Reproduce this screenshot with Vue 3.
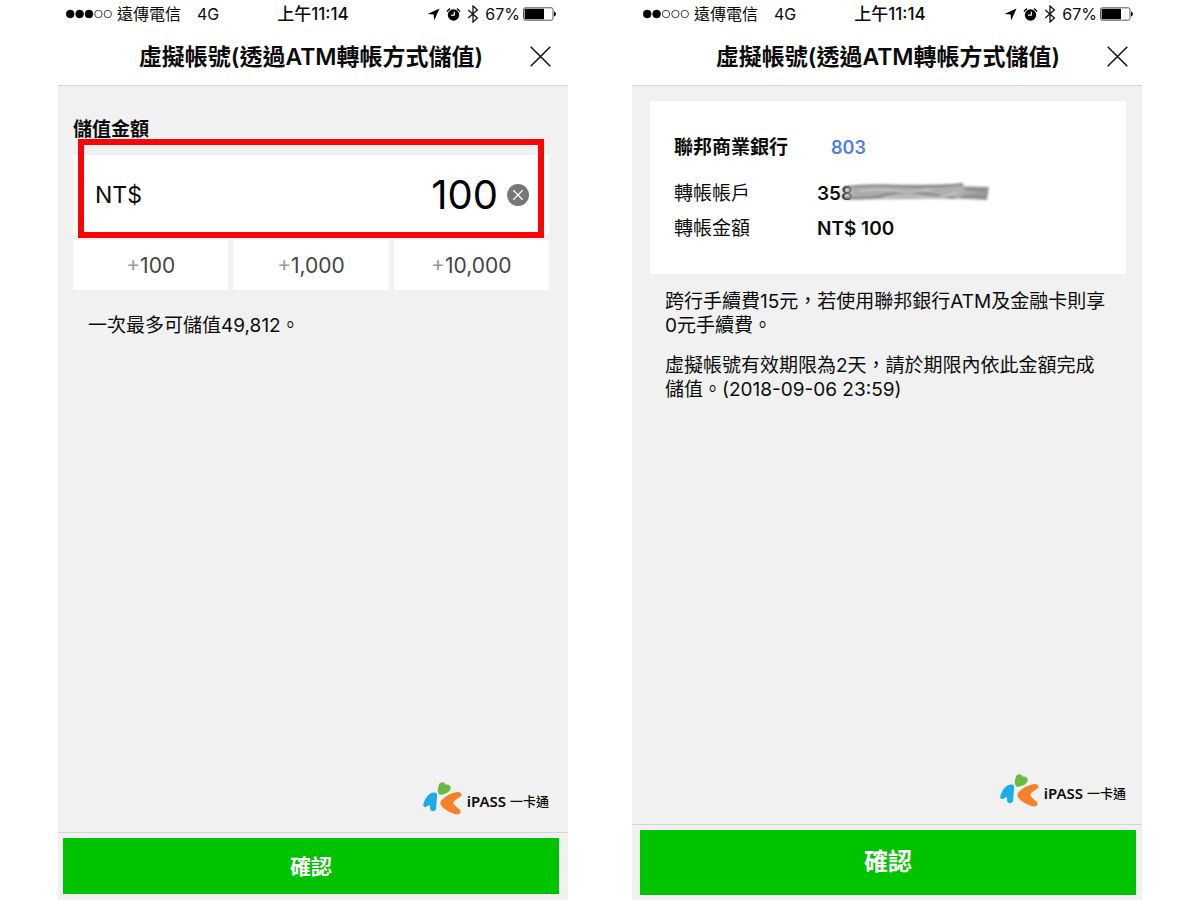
<script setup>
import { ref } from 'vue'

const amount = ref('100')
const quickAmounts = [100, 1000, 10000]
const screens = [
  { id: 'amount', signal: 3 },
  { id: 'account', signal: 2 }
]

const addAmount = (value) => {
  amount.value = String(Number(amount.value) + value)
}
const clearAmount = () => {
  amount.value = ''
}
</script>

<template>
  <div class="page" lang="zh-Hant">
    <section v-for="screen in screens" :key="screen.id" class="phone" :class="screen.id">
      <header class="top">
        <div class="status">
          <div class="status-left">
            <svg class="signal" width="46" height="10" viewBox="0 0 46 10">
              <circle
                v-for="n in 5"
                :key="n"
                :cx="n * 9.4 - 5.2"
                cy="5"
                :r="n <= screen.signal ? 3.9 : 3.7"
                :class="{ on: n <= screen.signal }"
              />
            </svg>
            <span class="carrier">遠傳電信</span>
            <span>4G</span>
          </div>
          <span class="time">上午11:14</span>
          <div class="status-right">
            <svg class="location" width="13" height="13" viewBox="0 0 13 13">
              <path d="M12.5 0.5L7.2 12.5L6.6 6.5L0.5 6.1Z" />
            </svg>
            <svg class="alarm" width="15" height="15" viewBox="0 0 15 15">
              <circle cx="7.5" cy="8" r="5.7" />
              <path class="bell" d="M1 4.6A7.6 7.6 0 0 1 4.1 1.6M10.9 1.6A7.6 7.6 0 0 1 14 4.6" />
              <path class="hand" d="M8.3 4.8V8.2H5" />
            </svg>
            <svg class="bluetooth" width="12" height="18" viewBox="0 0 12 18">
              <path d="M1.2 5L10.4 13L6 17V1L10.4 5L1.2 13" />
            </svg>
            <span>67%</span>
            <svg class="battery" width="33" height="14" viewBox="0 0 33 14">
              <rect class="shell" x="0.5" y="0.8" width="29.5" height="12.4" rx="1.8" />
              <rect x="1.6" y="1.8" width="19.4" height="10.4" />
              <path d="M31 4.6Q33 5.2 33 7T31 9.4Z" />
            </svg>
          </div>
        </div>
        <div class="title-bar">
          <h1>虛擬帳號(透過ATM轉帳方式儲值)</h1>
          <button class="close" type="button" aria-label="關閉">
            <svg width="21" height="21" viewBox="0 0 21 21">
              <path d="M0.7 0.7L20.3 20.3M20.3 0.7L0.7 20.3" />
            </svg>
          </button>
        </div>
      </header>

      <main v-if="screen.id === 'amount'" class="content">
        <label class="amount-label" for="amount">儲值金額</label>
        <div class="amount-card">
          <span class="currency">NT$</span>
          <input id="amount" v-model="amount" class="amount-input" type="text" inputmode="numeric">
          <button class="clear" type="button" aria-label="清除" @click="clearAmount">
            <svg width="22" height="22" viewBox="0 0 22 22">
              <circle cx="11" cy="11" r="11" />
              <path d="M6.3 6.3L15.7 15.7M15.7 6.3L6.3 15.7" />
            </svg>
          </button>
          <div class="highlight"></div>
        </div>
        <div class="quick">
          <button v-for="value in quickAmounts" :key="value" type="button" @click="addAmount(value)">
            <span class="plus">+</span>{{ value.toLocaleString('en-US') }}
          </button>
        </div>
        <p class="limit">一次最多可儲值49,812。</p>
      </main>

      <main v-else class="content">
        <dl class="account-card">
          <div class="bank">
            <dt>聯邦商業銀行</dt>
            <dd>803</dd>
          </div>
          <div class="row">
            <dt>轉帳帳戶</dt>
            <dd class="masked">
              358
              <svg class="smudge" width="164" height="26" viewBox="0 0 164 26">
                <defs>
                  <linearGradient id="smear" x1="0" x2="1" y1="0" y2="0">
                    <stop offset="0" stop-color="#999" stop-opacity="0" />
                    <stop offset="0.12" stop-color="#aaa" />
                    <stop offset="0.8" stop-color="#b0b0b0" />
                    <stop offset="1" stop-color="#959595" />
                  </linearGradient>
                </defs>
                <g class="soft">
                  <path fill="url(#smear)" d="M6 6L50 4L132 3L133 5L158 6L156 19L130 18L80 18L6 19Z" />
                  <path class="dark" d="M14 6Q40 3 70 5T132 3" />
                  <path class="dark" d="M14 17Q38 18 54 14T88 12T124 17" />
                  <path class="light" d="M28 10Q50 7 64 10T100 8M52 17Q74 13 92 16T126 11" />
                  <path class="dark" d="M134 8L154 9M130 16Q142 14 154 17" />
                </g>
              </svg>
            </dd>
          </div>
          <div class="row">
            <dt>轉帳金額</dt>
            <dd>NT$ 100</dd>
          </div>
        </dl>
        <div class="notes">
          <p>跨行手續費15元，若使用聯邦銀行ATM及金融卡則享0元手續費。</p>
          <p>虛擬帳號有效期限為2天，請於期限內依此金額完成儲值。(2018-09-06 23:59)</p>
        </div>
      </main>

      <div class="brand">
        <svg width="39" height="33" viewBox="36 35 116 98">
          <path class="blue" d="M37 101C42 84 51 70 64 67C73 65 79 68 78 75L75 113C74 124 58 125 57 114L57 104C52 103 49 107 44 109C39 110 36 106 37 101Z" />
          <path class="green" d="M84 72C79 64 79 56 82 48C84 34 98 32 103 43C113 41 121 48 118 56C115 66 98 75 84 72Z" />
          <path class="orange" d="M90 91C101 78 119 68 138 65C149 64 155 73 147 79C137 86 128 90 126 98C130 106 139 111 145 117C152 126 145 133 134 131C118 128 100 117 90 105C87 101 87 95 90 91Z" />
        </svg>
        <span class="brand-en">iPASS</span>
        <span class="brand-zh">一卡通</span>
      </div>
      <footer class="bottom">
        <button class="confirm" type="button">確認</button>
      </footer>
    </section>
  </div>
</template>

<style>
body {
  margin: 0;
  background: #fff;
}
</style>

<style scoped>
.page {
  display: grid;
  grid-template-columns: repeat(2, minmax(0, 1fr));
  gap: 64px;
  min-height: 100vh;
  padding: 0 58px;
  box-sizing: border-box;
  font-family: Inter, "Noto Sans CJK TC", sans-serif;
  color: #0c0c0c;
}

button {
  border: 0;
  padding: 0;
  background: none;
  font-family: inherit;
  cursor: pointer;
}

svg {
  display: block;
  flex: none;
}

.phone {
  display: flex;
  flex-direction: column;
  background: #f1f1f1;
}

/* status bar and title */
.top {
  background: #fff;
  border-bottom: 1px solid #d6d6d6;
}

.amount .top,
.amount .bottom {
  padding: 0 9px 0 5px;
}

.account .top,
.account .bottom {
  padding: 0 6px 0 8px;
}

.status {
  display: grid;
  grid-template-columns: 1fr auto 1fr;
  align-items: center;
  height: 28px;
  padding: 0 3px;
  font-size: 16px;
  line-height: 20px;
}

.status-left,
.status-right {
  display: flex;
  align-items: center;
}

.status-right {
  justify-content: flex-end;
}

.signal circle {
  fill: none;
  stroke: #111;
  stroke-width: 0.8;
}

.signal .on {
  fill: #000;
}

.carrier {
  margin: 0 16px 0 5px;
}

.time {
  padding-left: 4px;
  font-size: 17px;
  font-weight: 500;
}

.alarm {
  margin: 0 6px;
}

.alarm .bell {
  fill: none;
  stroke: #000;
  stroke-width: 1.3;
}

.alarm .hand {
  fill: none;
  stroke: #fff;
  stroke-width: 1.2;
}

.bluetooth {
  margin-right: 6px;
}

.bluetooth path {
  fill: none;
  stroke: #111;
  stroke-width: 1.3;
}

.battery {
  margin-left: 3px;
}

.battery .shell {
  fill: none;
  stroke: #555;
}

.title-bar {
  display: grid;
  grid-template-columns: 29px 1fr 29px;
  align-items: center;
  height: 57px;
}

.title-bar h1 {
  grid-column: 2;
  margin: 0;
  font-size: 23px;
  line-height: 30px;
  font-weight: 600;
  text-align: center;
  white-space: nowrap;
}

.close path {
  stroke: #111;
  stroke-width: 1.5;
}

/* amount form */
.amount .content {
  padding: 32px 19px 0 15px;
}

.amount-label {
  display: block;
  font-size: 19px;
  line-height: 24px;
  font-weight: 700;
}

.amount-card {
  position: relative;
  display: flex;
  align-items: center;
  height: 80px;
  margin-top: 13px;
  padding: 0 20px 0 22px;
  background: #fff;
}

.highlight {
  position: absolute;
  inset: -16px 5px -3px;
  border: 6px solid #f80505;
  pointer-events: none;
}

.currency {
  font-size: 23px;
}

.amount-input {
  flex: 1;
  min-width: 0;
  padding: 0;
  border: 0;
  outline: none;
  background: none;
  color: #000;
  font-family: inherit;
  font-size: 40px;
  line-height: 48px;
  text-align: right;
}

.clear {
  margin-left: 9px;
}

.clear circle {
  fill: #777;
}

.clear path {
  stroke: #fff;
  stroke-width: 1.3;
}

.quick {
  display: grid;
  grid-template-columns: repeat(3, 1fr);
  gap: 5px;
  margin-top: 5px;
}

.quick button {
  height: 50px;
  background: #fff;
  color: #444;
  font-size: 21px;
}

.plus {
  color: #999;
}

.limit {
  margin: 24px 15px 0;
  font-size: 19px;
  line-height: 24px;
}

/* transfer details */
.account .content {
  padding: 15px 16px 0 18px;
}

.account-card {
  margin: 0;
  padding: 34px 24px 33px;
  background: #fff;
  font-size: 19px;
  line-height: 25px;
}

.account-card dd {
  margin: 0;
  font-weight: 600;
}

.bank,
.row {
  display: grid;
  grid-template-columns: 143px 1fr;
}

.bank {
  margin-bottom: 21px;
  font-weight: 700;
}

.account-card .bank dd {
  padding-left: 14px;
  color: #4f7fe0;
  font-size: 18px;
}

.row + .row {
  margin-top: 10px;
}

.masked {
  position: relative;
}

.smudge {
  position: absolute;
  top: 0;
  left: 14px;
}

.soft {
  filter: blur(1px);
}

.smudge .dark,
.smudge .light {
  fill: none;
  stroke: #858585;
  stroke-width: 2;
}

.smudge .light {
  stroke: #c4c4c4;
}

.notes {
  padding: 16px 15px 0;
  font-size: 19px;
  line-height: 24px;
}

.notes p {
  margin: 0 0 16px;
}

/* logo and confirm button */
.brand {
  display: flex;
  align-items: center;
  justify-content: flex-end;
  margin-top: auto;
  padding: 0 19px 17px 0;
  line-height: 20px;
}

.account .brand {
  padding-right: 16px;
}

.brand-en,
.brand-zh {
  padding-top: 5px;
}

.brand-en {
  margin: 0 4px 0 5px;
  font-family: "Noto Sans", sans-serif;
  font-size: 15px;
  font-weight: 600;
}

.brand-zh {
  font-size: 13px;
  font-weight: 500;
}

.blue {
  fill: #1aaee5;
}

.green {
  fill: #6cb844;
}

.orange {
  fill: #f5822a;
}

.bottom {
  border-top: 1px solid #d3d5d6;
}

.confirm {
  width: 100%;
  height: 56px;
  margin: 5px 0 6px;
  padding-bottom: 3px;
  background: #00c300;
  color: #fff;
  font-size: 21px;
  font-weight: 700;
}

.account .confirm {
  height: 65px;
  margin-bottom: 5px;
  padding-bottom: 6px;
  font-size: 24px;
}

.confirm,
.close,
.clear {
  display: block;
}
</style>
